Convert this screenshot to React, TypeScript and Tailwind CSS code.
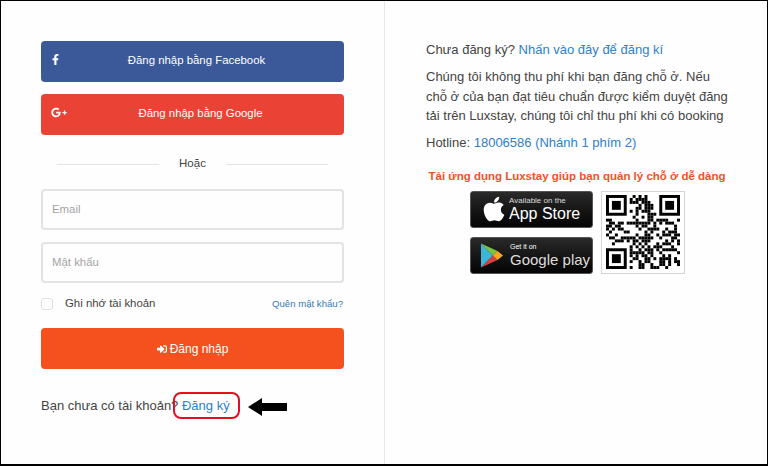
import { FaApple, FaFacebookF, FaGooglePlusG, FaSignInAlt } from "react-icons/fa"

const font = { fontFamily: '"Liberation Sans", Arial, sans-serif' }

// qr is only a drawing: three finder squares plus a fixed noise pattern
function QrCode() {
  const size = 25
  const cells: [number, number][] = []
  let seed = 7331
  for (let y = 0; y < size; y++) {
    for (let x = 0; x < size; x++) {
      const inFinder = (x < 8 && y < 8) || (x > 16 && y < 8) || (x < 8 && y > 16)
      if (inFinder) continue
      seed = (seed * 1103515245 + 12345) & 0x7fffffff
      if ((seed >> 16) % 100 < 52) cells.push([x, y])
    }
  }
  const finder = (x: number, y: number) => (
    <g key={`${x}-${y}`}>
      <rect x={x + 0.5} y={y + 0.5} width={6} height={6} fill="none" stroke="#000" strokeWidth={1} />
      <rect x={x + 2} y={y + 2} width={3} height={3} fill="#000" />
    </g>
  )
  return (
    <svg viewBox="0 0 25 25" className="w-[74px] h-[74px]">
      {cells.map(([x, y]) => (
        <rect key={`${x}:${y}`} x={x} y={y} width={1} height={1} fill="#000" />
      ))}
      {finder(0, 0)}
      {finder(18, 0)}
      {finder(0, 18)}
    </svg>
  )
}

function PlayIcon() {
  return (
    <svg viewBox="0 0 24 26" className="w-[22px] h-[25px] shrink-0">
      <polygon points="0,0 13,13 0,26" fill="#3bb6d8" />
      <polygon points="0,0 13,13 18,8" fill="#7dc242" />
      <polygon points="0,26 13,13 18,18" fill="#d8403f" />
      <polygon points="18,8 24,13 18,18 13,13" fill="#f7a823" />
    </svg>
  )
}

function Divider() {
  return (
    <div className="flex items-center justify-between px-4 mt-[19px] h-[20px]">
      <div className="h-px w-[102px] bg-[#e4e4e4]" />
      <span className="text-[11.5px] text-[#444]">Hoặc</span>
      <div className="h-px w-[102px] bg-[#e4e4e4]" />
    </div>
  )
}

function Field({ label, className }: { label: string; className: string }) {
  return (
    <div className={`h-[41px] rounded border-2 border-[#e3e3e3] flex items-center pl-[9px] text-[11.4px] text-[#a3a3a3] ${className}`}>
      {label}
    </div>
  )
}

export default function App() {
  return (
    <div
      style={font}
      className="w-[768px] h-[466px] bg-[#fefefe] border border-black border-b-2 flex overflow-hidden"
    >
      {/* Login column */}
      <div className="relative w-[384px] h-full border-r border-[#e8e8e8] pl-[40px] pr-[40px] pt-[40px]">
        <div className="relative h-[41px] rounded bg-[#3b5998] text-white text-[11.4px] flex items-center justify-center">
          <FaFacebookF className="absolute left-[10px] top-[13px] w-[9px] h-[11px]" />
          <span className="ml-[8px] mt-[-1px]">Đăng nhập bằng Facebook</span>
        </div>
        <div className="relative h-[41px] mt-[12px] rounded bg-[#ea4335] text-white text-[11.4px] flex items-center justify-center">
          <FaGooglePlusG className="absolute left-[10px] top-[12px] w-[16px] h-[13px]" />
          <span className="ml-[16px] mt-[-1px]">Đăng nhập bằng Google</span>
        </div>

        <Divider />

        <Field label="Email" className="mt-[15px]" />
        <Field label="Mật khẩu" className="mt-[12px]" />

        <div className="flex items-center justify-between mt-[13px] h-[16px]">
          <div className="flex items-center">
            <div className="w-[12px] h-[12px] rounded-[3px] border border-[#e0e0e0] bg-white" />
            <span className="ml-[12px] text-[11.4px] text-[#444]">Ghi nhớ tài khoản</span>
          </div>
          <span className="mr-px text-[9.6px] text-[#337ab7]">Quên mật khẩu?</span>
        </div>

        <div className="h-[41px] mt-[16px] rounded bg-[#f4511e] text-white text-[12px] flex items-center justify-center gap-[3px]">
          <FaSignInAlt className="w-[10px] h-[10px]" />
          <span>Đăng nhập</span>
        </div>

        <p className="mt-[27px] text-[13px] leading-[20px] text-[#444]">
          Bạn chưa có tài khoản? <span className="text-[#2f80c9]">Đăng ký</span>
        </p>

        {/* annotation over the link */}
        <div className="absolute left-[172px] top-[391px] w-[67px] h-[27px] rounded-[8px] border-2 border-[#e0101e]" />
        <svg viewBox="0 0 40 20" className="absolute left-[247px] top-[396px] w-[40px] h-[20px]">
          <polygon points="0,10 14,1 14,6 39,6 39,14 14,14 14,19" fill="#000" />
        </svg>
      </div>

      {/* Info column */}
      <div className="flex-1 pl-[41px] pt-[39px] text-[#444]">
        <p className="text-[13px] leading-[20px]">
          Chưa đăng ký? <span className="text-[#2f80c9]">Nhấn vào đây để đăng kí</span>
        </p>
        <p className="mt-[7px] w-[305px] text-[13px] leading-[19.5px]">
          Chúng tôi không thu phí khi bạn đăng chỗ ở. Nếu chỗ ở của bạn đạt tiêu chuẩn được kiểm duyệt đăng tải trên
          Luxstay, chúng tôi chỉ thu phí khi có booking
        </p>
        <p className="mt-[7px] text-[13px] leading-[20px]">
          Hotline: <span className="text-[#2f80c9]">18006586 (Nhánh 1 phím 2)</span>
        </p>

        <p className="mt-[15px] w-[302px] whitespace-nowrap text-center text-[11.5px] leading-[16px] font-bold text-[#f4511e]">
          Tải ứng dụng Luxstay giúp bạn quản lý chỗ ở dễ dàng
        </p>

        <div className="flex ml-[44px] mt-[7px] gap-[8px]">
          <div className="flex flex-col gap-[9px]">
            <div className="w-[123px] h-[37px] rounded-[3px] bg-linear-to-b from-[#2a2a2a] to-[#050505] border border-[#555] flex items-center pl-[11px] text-white">
              <FaApple className="w-[24px] h-[28px] shrink-0" />
              <div className="ml-[3px] flex flex-col">
                <span className="text-[8px] leading-[9px] text-[#ddd]">Available on the</span>
                <span className="text-[16px] leading-[17px]">App Store</span>
              </div>
            </div>
            <div className="w-[123px] h-[37px] rounded-[3px] bg-linear-to-b from-[#2a2a2a] to-[#050505] border border-[#555] flex items-center pl-[10px] text-white">
              <PlayIcon />
              <div className="ml-[7px] flex flex-col">
                <span className="text-[7px] leading-[8px]">Get it on</span>
                <span className="text-[15px] leading-[17px] text-[#ddd]">Google play</span>
              </div>
            </div>
          </div>
          <div className="w-[84px] h-[83px] border border-[#d5d5d5] bg-white flex items-center justify-center">
            <QrCode />
          </div>
        </div>
      </div>
    </div>
  )
}
